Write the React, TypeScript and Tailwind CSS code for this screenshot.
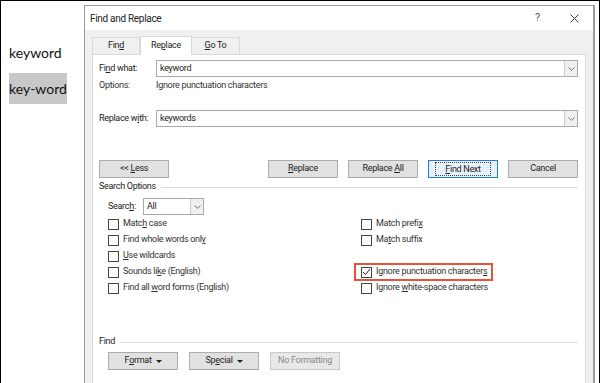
import React from "react";

const font = { fontFamily: 'Roboto, "Open Sans", sans-serif' };

const Chevron = () => (
  <svg width="7" height="4" viewBox="0 0 7 4" className="text-[#606060]">
    <path d="M0.5 0.5 L3.5 3.3 L6.5 0.5" fill="none" stroke="currentColor" strokeWidth="0.9" />
  </svg>
);

const Caret = () => (
  <svg width="6" height="3" viewBox="0 0 6 3" className="ml-[4px]">
    <path d="M0 0 H6 L3 3 Z" fill="#222" />
  </svg>
);

const Combo = ({ value }: { value: string }) => (
  <div className="flex h-[17px] flex-1 items-center border border-[#a9a9a9] bg-white">
    <span className="flex-1 pl-[3px] text-[9px] text-[#222]">{value}</span>
    <span className="flex h-full w-[13px] items-center justify-center border-l border-[#c9c9c9] bg-[#f0f0f0]">
      <Chevron />
    </span>
  </div>
);

const Btn = ({
  children,
  focus,
  disabled,
}: {
  children: React.ReactNode;
  focus?: boolean;
  disabled?: boolean;
}) => (
  <div
    className={`flex h-[18px] w-[70px] shrink-0 items-center justify-center border text-[9px] ${
      focus
        ? "border-[#2a79d6] bg-[#e5f1fb] text-[#222]"
        : disabled
        ? "border-[#c8c8c8] bg-[#e8e8e8] text-[#8a8a8a]"
        : "border-[#adadad] bg-[#e1e1e1] text-[#222]"
    }`}
  >
    <span
      className={`inline-flex items-center whitespace-pre ${
        focus ? "border border-dotted border-[#444] px-[9px] leading-[12px]" : ""
      }`}
    >
      {children}
    </span>
  </div>
);

const Check = ({ label, checked }: { label: React.ReactNode; checked?: boolean }) => (
  <div className="flex h-[16px] items-center gap-[4px] text-[9px] text-[#333]">
    <span className="flex h-[11px] w-[11px] items-center justify-center border border-[#444] bg-white">
      {checked && (
        <svg width="9" height="8" viewBox="0 0 9 8">
          <path d="M1 4 L3.5 6.5 L8 1" fill="none" stroke="#222" strokeWidth="1" />
        </svg>
      )}
    </span>
    <span className="whitespace-nowrap">{label}</span>
  </div>
);

const Group = ({ title }: { title: string }) => (
  <div className="flex h-[14px] items-center gap-[5px] text-[9px] text-[#222]">
    <span>{title}</span>
    <span className="h-px flex-1 bg-[#dcdcdc]" />
  </div>
);

export default function App() {
  return (
    <div
      className="flex h-[383px] w-[600px] overflow-hidden border-l border-r border-t border-black bg-white"
      style={font}
    >
      <div className="w-[83px] shrink-0 pl-[8px] pt-[41px]" style={{ fontFamily: '"Lato", "Open Sans", sans-serif' }}>
        <div className="h-[22px] text-[14px] leading-[22px] text-[#111]">keyword</div>
        <div className="mt-[9px] flex h-[31px] w-[58px] items-center whitespace-nowrap bg-[#c8c8c8] text-[14px] text-[#111]">
          key-word
        </div>
      </div>

      <div className="mt-[4px] mr-[4px] flex flex-1 flex-col border-l border-r-2 border-t border-[#9a9a9a] bg-[#f0f0f0] tracking-[-0.3px]">
        <div className="flex h-[24px] shrink-0 items-center bg-white pl-[5px] pr-[14px] text-[10px] text-[#222]">
          <span className="flex-1">Find and Replace</span>
          <span className="mr-[30px] text-[11px] text-[#555]">?</span>
          <svg width="9" height="9" viewBox="0 0 9 9">
            <path d="M0.5 0.5 L8.5 8.5 M8.5 0.5 L0.5 8.5" stroke="#333" strokeWidth="1" />
          </svg>
        </div>

        <div className="flex flex-1 flex-col pl-[7px] pr-[7px] pt-[6px]">
          <div className="flex h-[18px] shrink-0 items-end text-[9px] text-[#222]">
            <div className="flex h-[17px] w-[48px] items-center justify-center border border-b-0 border-[#dadada] bg-[#f0f0f0]">
              <span className="whitespace-pre">
                Fin<u>d</u>
              </span>
            </div>
            <div className="relative z-10 -mb-px flex h-[19px] w-[52px] items-center justify-center border border-b-0 border-[#dadada] bg-white">
              <span className="whitespace-pre">
                Re<u>p</u>lace
              </span>
            </div>
            <div className="flex h-[17px] w-[48px] items-center justify-center border border-b-0 border-l-0 border-[#dadada] bg-[#f0f0f0]">
              <span className="whitespace-pre">
                <u>G</u>o To
              </span>
            </div>
          </div>

          <div className="flex flex-1 flex-col border border-b-0 border-[#dadada] bg-white pl-[6px] pr-[7px] pt-[5px]">
            <div className="flex items-center text-[9px] text-[#222]">
              <span className="w-[57px] whitespace-nowrap">
                Fi<u>n</u>d what:
              </span>
              <Combo value="keyword" />
            </div>
            <div className="mt-[2px] flex h-[14px] items-center text-[9px] text-[#333]">
              <span className="w-[57px]">Options:</span>
              <span>Ignore punctuation characters</span>
            </div>
            <div className="mt-[17px] flex items-center text-[9px] text-[#222]">
              <span className="w-[57px] whitespace-nowrap">
                Replace w<u>i</u>th:
              </span>
              <Combo value="keywords" />
            </div>

            <div className="mt-[33px] flex gap-[10px]">
              <Btn>
                &lt;&lt; <u>L</u>ess
              </Btn>
              <div className="flex-1" />
              <Btn>
                <u>R</u>eplace
              </Btn>
              <Btn>
                Replace <u>A</u>ll
              </Btn>
              <Btn focus>
                <u>F</u>ind Next
              </Btn>
              <Btn>Cancel</Btn>
            </div>

            <div className="mt-[2px]">
              <Group title="Search Options" />
            </div>

            <div className="mt-[4px] flex items-center pl-[9px] text-[9px] text-[#222]">
              <span className="w-[35px] whitespace-nowrap">
                Searc<u>h</u>:
              </span>
              <div className="flex w-[61px]">
                <Combo value="All" />
              </div>
            </div>

            <div className="mt-[1px] flex pl-[9px]">
              <div className="flex w-[253px] flex-col">
                <Check label={<>Matc<u>h</u> case</>} />
                <Check label={<>Find whole words onl<u>y</u></>} />
                <Check label={<><u>U</u>se wildcards</>} />
                <Check label={<>Sounds li<u>k</u>e (English)</>} />
                <Check label={<>Find all <u>w</u>ord forms (English)</>} />
              </div>
              <div className="flex flex-col">
                <Check label={<>Match prefi<u>x</u></>} />
                <Check label={<>Ma<u>t</u>ch suffix</>} />
                <div className="h-[16px]" />
                <div className="relative">
                  <Check checked label={<>Ignore punctuation character<u>s</u></>} />
                  <span className="pointer-events-none absolute -left-[7px] -top-[1px] h-[18px] w-[139px] border-2 border-[#e5533d]" />
                </div>
                <Check label={<>Ignore <u>w</u>hite-space characters</>} />
              </div>
            </div>

            <div className="mt-[39px]">
              <Group title="Find" />
            </div>

            <div className="mt-[3px] flex gap-[11px] pl-[9px]">
              <Btn>
                F<u>o</u>rmat
                <Caret />
              </Btn>
              <Btn>
                Sp<u>e</u>cial
                <Caret />
              </Btn>
              <Btn disabled>No Formatting</Btn>
            </div>
          </div>
        </div>
      </div>
    </div>
  );
}
